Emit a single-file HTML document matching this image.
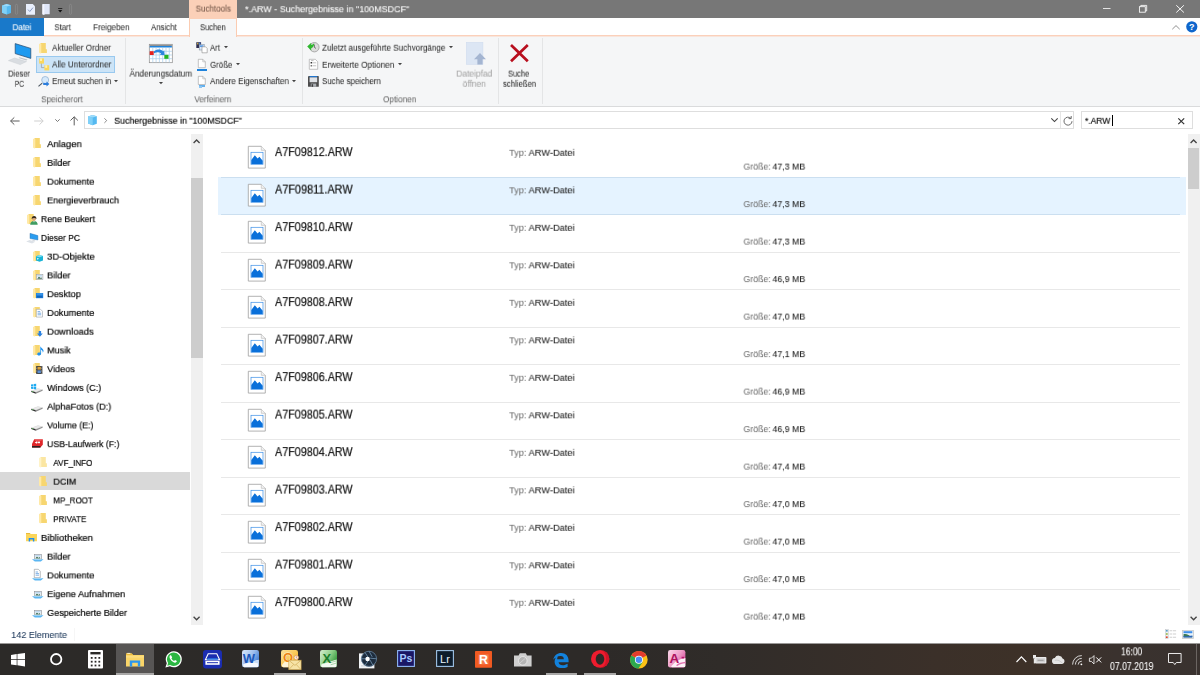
<!DOCTYPE html>
<html lang="de"><head><meta charset="utf-8"><title>*.ARW - Suchergebnisse in "100MSDCF"</title>
<style>
html,body{margin:0;padding:0;width:1200px;height:675px;overflow:hidden;background:#fff;font-family:"Liberation Sans",sans-serif;}
.t{position:absolute;line-height:1;white-space:nowrap;transform-origin:0 50%;will-change:transform;}
.b{position:absolute;}
svg{position:absolute;overflow:visible;}
</style></head><body>
<div class="b" style="left:0px;top:18px;width:1200px;height:18px;background:#ffffff;"></div>
<div class="b" style="left:0px;top:0px;width:1200px;height:18px;background:#777777;"></div>
<div class="b" style="left:189.2px;top:0px;width:47.6px;height:19px;background:#fbd0b8;"></div>
<div class="b" style="left:0px;top:18px;width:44px;height:17.5px;background:#1979ca;"></div>
<div class="b" style="left:0px;top:36px;width:1200px;height:70px;background:#f5f6f7;"></div>
<div class="b" style="left:44px;top:35px;width:1156px;height:1px;background:#fbd0ba;"></div>
<div class="b" style="left:44px;top:36px;width:1156px;height:1px;background:#f8e5dc;"></div>
<div class="b" style="left:189.2px;top:19px;width:47.5px;height:18px;background:#f5f6f7;border-left:1px solid #fbccb2;border-right:1px solid #fbccb2;box-sizing:border-box;"></div>
<div class="b" style="left:0px;top:106px;width:1200px;height:1px;background:#dadbdc;"></div>
<div class="b" style="left:125px;top:38px;width:1px;height:66px;background:#e4e5e6;"></div>
<div class="b" style="left:302px;top:38px;width:1px;height:66px;background:#e4e5e6;"></div>
<div class="b" style="left:498px;top:38px;width:1px;height:66px;background:#e4e5e6;"></div>
<div class="b" style="left:542px;top:38px;width:1px;height:66px;background:#e4e5e6;"></div>
<div class="b" style="left:35.6px;top:56.3px;width:79.4px;height:16.3px;background:#cce4f7;border:1px solid #99c9ef;box-sizing:border-box;"></div>
<svg style="left:114.4px;top:79.6px" width="4" height="2.2" viewBox="0 0 4 2.2"><path d="M0 0h4L2 2.2z" fill="#444"/></svg>
<svg style="left:223.7px;top:46.3px" width="4" height="2.2" viewBox="0 0 4 2.2"><path d="M0 0h4L2 2.2z" fill="#444"/></svg>
<svg style="left:235.6px;top:63.3px" width="4" height="2.2" viewBox="0 0 4 2.2"><path d="M0 0h4L2 2.2z" fill="#444"/></svg>
<svg style="left:291.8px;top:79.6px" width="4" height="2.2" viewBox="0 0 4 2.2"><path d="M0 0h4L2 2.2z" fill="#444"/></svg>
<svg style="left:449px;top:46.3px" width="4" height="2.2" viewBox="0 0 4 2.2"><path d="M0 0h4L2 2.2z" fill="#444"/></svg>
<svg style="left:397.6px;top:63.3px" width="4" height="2.2" viewBox="0 0 4 2.2"><path d="M0 0h4L2 2.2z" fill="#444"/></svg>
<svg style="left:158.8px;top:82px" width="4" height="2.2" viewBox="0 0 4 2.2"><path d="M0 0h4L2 2.2z" fill="#444"/></svg>
<div class="b" style="left:0px;top:107px;width:1200px;height:26px;background:#ffffff;"></div>
<div class="b" style="left:84px;top:111px;width:990px;height:18px;background:#ffffff;border:1px solid #dedede;box-sizing:border-box;"></div>
<div class="b" style="left:1060px;top:112px;width:1px;height:16px;background:#e5e5e5;"></div>
<div class="b" style="left:1081px;top:111px;width:112px;height:18px;background:#ffffff;border:1px solid #dedede;box-sizing:border-box;"></div>
<div class="b" style="left:1111.6px;top:115px;width:0.8px;height:10.5px;background:#000;"></div>
<div class="b" style="left:0px;top:472.2px;width:190px;height:17.8px;background:#d9d9d9;"></div>
<div class="b" style="left:190.5px;top:134px;width:12.5px;height:491px;background:#f0f0f0;"></div>
<div class="b" style="left:191px;top:178.3px;width:11.7px;height:179.6px;background:#cdcdcd;"></div>
<div class="b" style="left:218px;top:177.1px;width:968px;height:37.5px;background:#e5f3ff;"></div>
<div class="b" style="left:221px;top:176.8px;width:959px;height:1px;background:#cbdff0;"></div>
<div class="b" style="left:221px;top:214.3px;width:959px;height:1px;background:#cbdff0;"></div>
<div class="b" style="left:1187.5px;top:134px;width:12.5px;height:491px;background:#f0f0f0;"></div>
<div class="b" style="left:1188px;top:147.5px;width:11px;height:41.7px;background:#cdcdcd;"></div>
<div class="b" style="left:221px;top:251.8px;width:959px;height:1px;background:#e8e8e8;"></div>
<div class="b" style="left:221px;top:289.3px;width:959px;height:1px;background:#e8e8e8;"></div>
<div class="b" style="left:221px;top:326.8px;width:959px;height:1px;background:#e8e8e8;"></div>
<div class="b" style="left:221px;top:364.3px;width:959px;height:1px;background:#e8e8e8;"></div>
<div class="b" style="left:221px;top:401.8px;width:959px;height:1px;background:#e8e8e8;"></div>
<div class="b" style="left:221px;top:439.3px;width:959px;height:1px;background:#e8e8e8;"></div>
<div class="b" style="left:221px;top:476.8px;width:959px;height:1px;background:#e8e8e8;"></div>
<div class="b" style="left:221px;top:514.3000000000001px;width:959px;height:1px;background:#e8e8e8;"></div>
<div class="b" style="left:221px;top:551.8000000000001px;width:959px;height:1px;background:#e8e8e8;"></div>
<div class="b" style="left:221px;top:589.3000000000001px;width:959px;height:1px;background:#e8e8e8;"></div>
<div class="b" style="left:0px;top:625px;width:1200px;height:19px;background:#ffffff;"></div>
<div class="b" style="left:74px;top:628px;width:1px;height:13px;background:#f6f6f6;"></div>
<div class="b" style="left:0px;top:643px;width:1200px;height:1px;background:#9a9897;"></div>
<div class="b" style="left:0px;top:644px;width:1200px;height:31px;background:linear-gradient(to right,#2c2a28 0%,#2d2a28 50%,#302c29 60%,#3b3029 78%,#3d3128 85%,#3a322e 93%,#39322f 100%);"></div>
<div class="b" style="left:1196px;top:644px;width:1px;height:31px;background:#6b6562;"></div>
<div class="b" style="left:116.2px;top:644px;width:38px;height:31px;background:#575554;"></div>
<div class="b" style="left:116.2px;top:673px;width:37.999999999999986px;height:2px;background:#a9a8a7;"></div>
<div class="b" style="left:274px;top:673px;width:31.80000000000001px;height:2px;background:#a9a8a7;"></div>
<div class="b" style="left:545.8px;top:673px;width:31.700000000000045px;height:2px;background:#a9a8a7;"></div>
<div class="b" style="left:584.2px;top:673px;width:31.59999999999991px;height:2px;background:#a9a8a7;"></div>
<svg style="left:1.7px;top:3.7px" width="9.0" height="10.4" viewBox="0 0 9 10.4"><path d="M0 1.6L4.6 0 9 1.2V9L4.8 10.4 0 8.8z" fill="#55b9f0"/><path d="M0 1.6L4.6 0 9 1.2 4.8 2.6z" fill="#9ddcfb"/><path d="M0 1.6L4.8 2.6V10.4L0 8.8z" fill="#7fd0f8"/></svg>
<svg style="left:15px;top:4px" width="3" height="10.7" viewBox="0 0 3 10.7"><rect x=".4" y=".4" width="2.2" height="9.9" rx="1.1" fill="none" stroke="#8d8d8d" stroke-width=".7"/></svg>
<svg style="left:69.3px;top:4px" width="3" height="10.7" viewBox="0 0 3 10.7"><rect x=".4" y=".4" width="2.2" height="9.9" rx="1.1" fill="none" stroke="#8d8d8d" stroke-width=".7"/></svg>
<svg style="left:26px;top:4px" width="9" height="10.7" viewBox="0 0 9 10.7"><path d="M0 0h6.8L9 2.2V10.7H0z" fill="#e9effc"/><path d="M2 5.6l1.8 1.9L7 3.6" fill="none" stroke="#7f92bd" stroke-width=".9"/></svg>
<svg style="left:42.3px;top:4px" width="7.7" height="10.7" viewBox="0 0 7.7 10.7"><path d="M1 0h6.7v10.2H3.4L2 10.7 .4 10.2V.6z" fill="#dfe6f8"/><path d="M1 0L2.3 .5v10l-1 .2L.4 10.2V.6z" fill="#f3f6fe"/></svg>
<svg style="left:58.2px;top:8px" width="4.4" height="5" viewBox="0 0 4.4 5"><path d="M.1 .5h4.200" stroke="#111" stroke-width=".8"/><path d="M.1 2h4.200L2.200 4.600z" fill="#111"/></svg>
<svg style="left:1103px;top:8px" width="7.5" height="1" viewBox="0 0 7.5 1"><path d="M0 .5h7.5" stroke="#fff" stroke-width=".8"/></svg>
<svg style="left:1138.7px;top:5px" width="8.2" height="7.6" viewBox="0 0 8.2 7.6"><rect x=".4" y="1.700" width="5.900" height="5.500" fill="none" stroke="#fff" stroke-width=".85"/><path d="M1.800 1.600V.4h5.900v5.500H6.500" fill="none" stroke="#fff" stroke-width=".85"/></svg>
<svg style="left:1175.7px;top:4.6px" width="8.2" height="7.8" viewBox="0 0 8.2 7.8"><path d="M.3 .3l7.600 7.200M7.900 .3L.3 7.500" stroke="#fff" stroke-width=".95"/></svg>
<svg style="left:1171.5px;top:24.5px" width="8" height="4.4" viewBox="0 0 8 4.4"><path d="M.3 4.200L4 .6 7.700 4.200" fill="none" stroke="#909090" stroke-width="1"/></svg>
<svg style="left:1185.7px;top:20.9px" width="11.6" height="11.6" viewBox="0 0 11.6 11.6"><circle cx="5.8" cy="5.8" r="5.6" fill="#0f66cc"/><text x="5.8" y="9" font-size="9" font-weight="bold" fill="#fff" text-anchor="middle" font-family="Liberation Sans, sans-serif">?</text></svg>
<svg style="left:8px;top:43px" width="24" height="22" viewBox="0 0 24 22"><path d="M7.2 .6l15.6 4.8v10L7.2 10.6z" fill="#1e9af0" stroke="#27476b" stroke-width=".7"/><path d="M11.6 14.2l8 2.4-1.2 .9-8-2.4z" fill="#bfc4ca"/><path d="M6.5 15l12 3.6-6.4 3L.4 17.6z" fill="#d9dde1"/><path d="M6.5 15l12 3.6-6.4 3L.4 17.6z" fill="none" stroke="#c3c8cd" stroke-width=".4"/></svg>
<svg style="left:39.3px;top:42.8px" width="8.0" height="10.6" viewBox="0 0 8 10.6"><path d="M1.5 0h5.3v6.2h1.1v3.9H1.5z" fill="#f7d670"/><path d="M0 .7l2.3 .3v9L1.2 10.6 0 9.5z" fill="#ffe9a6"/></svg>
<svg style="left:39px;top:58px" width="10.5" height="13" viewBox="0 0 10.5 13"><path d="M2.4 5v4.6h3.2" fill="none" stroke="#9a9a9a" stroke-width=".7"/><rect x=".2" y=".4" width="4.8" height="5.2" fill="#fbd75b"/><rect x="1" y=".4" width="2" height="2.6" fill="#fff0b0"/><rect x="5.4" y="7.2" width="4.8" height="5.2" fill="#fbd75b"/><rect x="6.2" y="7.2" width="2" height="2.6" fill="#fff0b0"/></svg>
<svg style="left:38px;top:76px" width="11.5" height="11" viewBox="0 0 11.5 11"><path d="M4.2 7.2L.5 10.3" stroke="#4a5560" stroke-width="1.1"/><circle cx="7.2" cy="4" r="3.5" fill="#d5e9fb" stroke="#93b3d3" stroke-width=".8"/><path d="M5.2 7h3.3V5.5L11.4 8 8.5 10.6V9H5.2z" fill="#2b7ddc"/></svg>
<svg style="left:149.2px;top:43.8px" width="23.6" height="19" viewBox="0 0 23.6 19"><rect x=".3" y=".3" width="23" height="18.4" fill="#fff" stroke="#8d8d8d" stroke-width=".7"/><rect x=".7" y=".7" width="22.2" height="1.3" fill="#8f8f8f"/><rect x=".7" y="2" width="22.2" height="1.5" fill="#1f83dc"/><path d="M3.80 3.6V18.4" stroke="#a9d0ee" stroke-width=".75"/><path d="M7.10 3.6V18.4" stroke="#a9d0ee" stroke-width=".75"/><path d="M10.40 3.6V18.4" stroke="#a9d0ee" stroke-width=".75"/><path d="M13.70 3.6V18.4" stroke="#a9d0ee" stroke-width=".75"/><path d="M17.00 3.6V18.4" stroke="#a9d0ee" stroke-width=".75"/><path d="M20.30 3.6V18.4" stroke="#a9d0ee" stroke-width=".75"/><path d="M.7 7.30H22.9" stroke="#a9d0ee" stroke-width=".75"/><path d="M.7 11.00H22.9" stroke="#a9d0ee" stroke-width=".75"/><path d="M.7 14.70H22.9" stroke="#a9d0ee" stroke-width=".75"/><rect x=".7" y="7.2" width="4" height="3.8" fill="#e5201c"/><rect x="15.3" y="10.8" width="4.2" height="4" fill="#22b522"/><path d="M4.900 7.400c3.200-2.600 7-2.400 9.200 0l1.100-1.100 .5 4.900-4.900-.5 1.200-1.200c-1.700-1.700-4.300-1.800-7.100 0z" fill="#2a86de"/></svg>
<svg style="left:196.4px;top:42px" width="11.6" height="11" viewBox="0 0 11.6 11"><rect x=".3" y=".2" width="4.8" height="5.8" fill="#2d2f52"/><rect x="1.2" y=".8" width="1.2" height="1.6" fill="#e8c23a"/><rect x="2.8" y=".8" width="1.6" height="1.6" fill="#3e78d6"/><rect x="3.2" y="2.6" width="5" height="5.4" fill="#dbe9fb" stroke="#7a8896" stroke-width=".5"/><rect x="4" y="3.4" width="3.4" height="1.4" fill="#3f8ae0"/><path d="M6 4.8h3.6l1.6 1.6v4.4H6z" fill="#fff" stroke="#8a8a8a" stroke-width=".6"/></svg>
<svg style="left:198.4px;top:59px" width="7.6" height="9" viewBox="0 0 7.6 9"><path d="M.3 .3h4.5l2.5 2.5v5.9H.3z" fill="#fff" stroke="#9c9c9c" stroke-width=".6"/><path d="M4.8 .3v2.5h2.5" fill="none" stroke="#9c9c9c" stroke-width=".5"/></svg>
<div class="b" style="left:197px;top:68.9px;width:10px;height:1.7px;background:#1f83dc;"></div>
<svg style="left:198.4px;top:76px" width="7.6" height="8.8" viewBox="0 0 7.6 8.8"><path d="M.3 .3h4.5l2.5 2.5v5.700000000000001H.3z" fill="#fff" stroke="#9c9c9c" stroke-width=".6"/><path d="M4.8 .3v2.5h2.5" fill="none" stroke="#9c9c9c" stroke-width=".5"/></svg>
<div class="b" style="left:198.8px;top:85.2px;width:6px;height:1.6px;background:#63b0ee;"></div>
<div class="b" style="left:198.8px;top:86.4px;width:3.6px;height:1.2px;background:#8cc6f3;"></div>
<svg style="left:307.4px;top:42.4px" width="12.4" height="10.6" viewBox="0 0 12.4 10.6"><circle cx="7.4" cy="5.2" r="4.7" fill="#dcdcdc" stroke="#9b9b9b" stroke-width=".8"/><path d="M7.4 2.6V5.4l1.6 1" fill="none" stroke="#444" stroke-width=".7"/><path d="M.2 4.600L4.200 .8V3C5.600 2.800 6.600 2 7.200 1 7.400 3.600 6.200 5.600 4.200 6.200V8.400z" fill="#2fb72f"/></svg>
<svg style="left:309.2px;top:59px" width="9" height="10.6" viewBox="0 0 9 10.6"><path d="M.3 .3h6L8.700 2.700v7.600H.3z" fill="#fff" stroke="#9c9c9c" stroke-width=".6"/><rect x="1.600" y="3" width="1.6" height="1.500" fill="#333"/><rect x="1.600" y="6" width="1.600" height="1.500" fill="#777"/><path d="M4 3.8h3.200M4 6.800h3.200M2 1.600h2.600" stroke="#999" stroke-width=".6"/></svg>
<svg style="left:308.4px;top:75.6px" width="10.8" height="10.8" viewBox="0 0 10.8 10.8"><rect x="0" y="0" width="10.800" height="10.800" rx=".5" fill="#4d4d4d"/><rect x="1.600" y="0" width="7.600" height="1.400" fill="#1f74cc"/><rect x="1.600" y="1.400" width="7.600" height="4.800" fill="#dfe2e6"/><rect x="2.800" y="7.600" width="5.400" height="3.200" fill="#a9adb2"/><rect x="3.600" y="8.200" width="1.500" height="2.600" fill="#3d3d3d"/></svg>
<svg style="left:466px;top:41.8px" width="20.2" height="22.8" viewBox="0 0 20.2 22.8"><rect x=".3" y=".3" width="16.600" height="22" fill="#dce6f4" stroke="#d0dcef" stroke-width=".6"/><path d="M14 11L20 17.200H16.600v5.400H11.400V17.200H8z" fill="#a4b5d1"/></svg>
<svg style="left:510px;top:44px" width="18.8" height="18.2" viewBox="0 0 18.8 18.2"><path d="M1 1l16.800 16.200M17.800 1L1 17.200" stroke="#b80f1e" stroke-width="2.700"/></svg>
<svg style="left:10px;top:116.5px" width="9.8" height="8" viewBox="0 0 9.8 8"><path d="M.6 4h9M4.300 .4L.6 4l3.700 3.600" fill="none" stroke="#5b5b5b" stroke-width="1"/></svg>
<svg style="left:34px;top:116.5px" width="9.8" height="8" viewBox="0 0 9.8 8"><path d="M.2 4h9M5.500 .4L9.200 4 5.500 7.600" fill="none" stroke="#cfcfcf" stroke-width="1"/></svg>
<svg style="left:55.2px;top:119px" width="5" height="3" viewBox="0 0 5 3"><path d="M.3 .3l2.200 2.200L4.700 .3" fill="none" stroke="#6a6a6a" stroke-width=".9"/></svg>
<svg style="left:69.7px;top:116.3px" width="8.4" height="9.4" viewBox="0 0 8.4 9.4"><path d="M4.200 .8v8.600M.5 4.500L4.200 .8l3.700 3.700" fill="none" stroke="#5b5b5b" stroke-width="1"/></svg>
<svg style="left:87.7px;top:114.6px" width="8.82" height="10.192" viewBox="0 0 9 10.4"><path d="M0 1.6L4.6 0 9 1.2V9L4.8 10.4 0 8.8z" fill="#55b9f0"/><path d="M0 1.6L4.6 0 9 1.2 4.8 2.6z" fill="#9ddcfb"/><path d="M0 1.6L4.8 2.6V10.4L0 8.8z" fill="#7fd0f8"/></svg>
<svg style="left:104px;top:117.5px" width="3.2" height="5.2" viewBox="0 0 3.2 5.2"><path d="M.4 .3l2.300 2.300L.4 4.900" fill="none" stroke="#6a6a6a" stroke-width=".8"/></svg>
<svg style="left:1051px;top:118.3px" width="7" height="4.2" viewBox="0 0 7 4.2"><path d="M.3 .4l3.200 3.200L6.700 .4" fill="none" stroke="#444" stroke-width="1.100"/></svg>
<svg style="left:1062.5px;top:115.8px" width="10" height="10" viewBox="0 0 10 10"><path d="M7.800 2.300A4 4 0 1 0 9 5.200" fill="none" stroke="#5a5a5a" stroke-width=".9"/><path d="M5.600 2.600h2.600V0" fill="none" stroke="#5a5a5a" stroke-width=".9"/></svg>
<svg style="left:1178px;top:117.5px" width="6.5" height="6.5" viewBox="0 0 6.5 6.5"><path d="M.3 .3l5.900 5.900M6.200 .3L.3 6.200" stroke="#333" stroke-width="1.200"/></svg>
<svg style="left:193px;top:138.8px" width="7.2" height="4.8" viewBox="0 0 7.2 4.8"><path d="M.6 4L3.600 1 6.600 4" fill="none" stroke="#454545" stroke-width="1.350"/></svg>
<svg style="left:193px;top:616.2px" width="7.2" height="4.8" viewBox="0 0 7.2 4.8"><path d="M.6 .800L3.600 3.800 6.600 .800" fill="none" stroke="#454545" stroke-width="1.350"/></svg>
<svg style="left:1190px;top:138.8px" width="7.2" height="4.8" viewBox="0 0 7.2 4.8"><path d="M.6 4L3.600 1 6.600 4" fill="none" stroke="#454545" stroke-width="1.350"/></svg>
<svg style="left:1190px;top:616.2px" width="7.2" height="4.8" viewBox="0 0 7.2 4.8"><path d="M.6 .800L3.600 3.800 6.600 .800" fill="none" stroke="#454545" stroke-width="1.350"/></svg>
<svg style="left:33.0px;top:138.39999999999998px" width="8.0" height="10.6" viewBox="0 0 8 10.6"><path d="M1.5 0h5.3v6.2h1.1v3.9H1.5z" fill="#f7d670"/><path d="M0 .7l2.3 .3v9L1.2 10.6 0 9.5z" fill="#ffe9a6"/></svg>
<svg style="left:33.0px;top:157.14999999999998px" width="8.0" height="10.6" viewBox="0 0 8 10.6"><path d="M1.5 0h5.3v6.2h1.1v3.9H1.5z" fill="#f7d670"/><path d="M0 .7l2.3 .3v9L1.2 10.6 0 9.5z" fill="#ffe9a6"/></svg>
<svg style="left:33.0px;top:175.89999999999998px" width="8.0" height="10.6" viewBox="0 0 8 10.6"><path d="M1.5 0h5.3v6.2h1.1v3.9H1.5z" fill="#f7d670"/><path d="M0 .7l2.3 .3v9L1.2 10.6 0 9.5z" fill="#ffe9a6"/></svg>
<svg style="left:33.0px;top:194.64999999999998px" width="8.0" height="10.6" viewBox="0 0 8 10.6"><path d="M1.5 0h5.3v6.2h1.1v3.9H1.5z" fill="#f7d670"/><path d="M0 .7l2.3 .3v9L1.2 10.6 0 9.5z" fill="#ffe9a6"/></svg>
<svg style="left:27px;top:213.6px" width="7.84" height="10.388" viewBox="0 0 8 10.6"><path d="M1.5 0h5.3v6.2h1.1v3.9H1.5z" fill="#f7d670"/><path d="M0 .7l2.3 .3v9L1.2 10.6 0 9.5z" fill="#ffe9a6"/></svg>
<svg style="left:29.6px;top:215.6px" width="8" height="9" viewBox="0 0 8 9"><path d="M.2 8.800C.2 6.400 1.800 5 4 5s3.700 1.400 3.700 3.800z" fill="#3f9c62"/><path d="M3.300 5l.7 1.600L4.700 5z" fill="#e8efe8"/><circle cx="4" cy="2.800" r="2.100" fill="#d7a77b"/><path d="M1.700 3C1.500 1 2.700 0 4.100 0s2.600 1 2.300 3C5.800 2.300 5 2 4 2.100 3 2.200 2.300 2.400 1.700 3z" fill="#33291f"/></svg>
<svg style="left:25.5px;top:233.14999999999998px" width="12.4" height="11" viewBox="0 0 12.4 11"><path d="M4 .3l7.900 2.300v4.400L4 5.600z" fill="#2a9df0" stroke="#2f6ea8" stroke-width=".4"/><path d="M6.400 6.800l3 .9-.5 .5-3-.9z" fill="#c5cad0"/><path d="M3.600 7l5.800 1.700-3.400 1.700L.2 8.600z" fill="#dde2e8"/></svg>
<svg style="left:33.0px;top:250.89999999999998px" width="8.0" height="10.6" viewBox="0 0 8 10.6"><path d="M1.5 0h5.3v6.2h1.1v3.9H1.5z" fill="#f7d670"/><path d="M0 .7l2.3 .3v9L1.2 10.6 0 9.5z" fill="#ffe9a6"/></svg>
<svg style="left:36px;top:255.39999999999998px" width="7" height="6.8" viewBox="0 0 7 6.8"><path d="M0 1.200L3.400 0 7 1V5.600L3.600 6.800 0 5.600z" fill="#19b4d6"/><path d="M0 1.200L3.400 0 7 1 3.600 2.200z" fill="#7fe0f2"/><path d="M1.200 2.800l1.800 .9-1.800 1z" fill="#eafcff"/></svg>
<svg style="left:33.0px;top:269.65px" width="8.0" height="10.6" viewBox="0 0 8 10.6"><path d="M1.5 0h5.3v6.2h1.1v3.9H1.5z" fill="#f7d670"/><path d="M0 .7l2.3 .3v9L1.2 10.6 0 9.5z" fill="#ffe9a6"/></svg>
<svg style="left:36px;top:274.05px" width="7.2" height="6" viewBox="0 0 7.2 6"><rect x=".3" y=".3" width="6.600" height="5.400" fill="#f4f6f8" stroke="#9aa0a6" stroke-width=".6"/><path d="M1.200 4.800l1.800-2.400 1.400 1.600.8-.8 1 1.600z" fill="#3e6f58"/><rect x="1.200" y="1.100" width="4.800" height="1.400" fill="#b9d6ee"/></svg>
<svg style="left:33.0px;top:288.4px" width="8.0" height="10.6" viewBox="0 0 8 10.6"><path d="M1.5 0h5.3v6.2h1.1v3.9H1.5z" fill="#f7d670"/><path d="M0 .7l2.3 .3v9L1.2 10.6 0 9.5z" fill="#ffe9a6"/></svg>
<svg style="left:36px;top:293.4px" width="7.2" height="5.2" viewBox="0 0 7.2 5.2"><rect x="0" y="0" width="7.200" height="5.200" fill="#1e7fdc"/><rect x=".8" y="3.400" width="5.600" height="1" fill="#0d55a6"/><rect x=".6" y=".5" width="6" height="1" fill="#4ea7f0"/></svg>
<svg style="left:33.0px;top:307.15px" width="8.0" height="10.6" viewBox="0 0 8 10.6"><path d="M1.5 0h5.3v6.2h1.1v3.9H1.5z" fill="#f7d670"/><path d="M0 .7l2.3 .3v9L1.2 10.6 0 9.5z" fill="#ffe9a6"/></svg>
<svg style="left:36.1px;top:309.05px" width="6.8" height="8.4" viewBox="0 0 6.8 8.4"><path d="M.3 .3h4.300l1.900 1.900v5.900H.3z" fill="#fff" stroke="#9aa0a6" stroke-width=".6"/><path d="M1.600 2.600h2.600M1.600 4.200h3.600M1.600 5.800h3.600" stroke="#4b8fd8" stroke-width=".7"/></svg>
<svg style="left:33.0px;top:325.9px" width="8.0" height="10.6" viewBox="0 0 8 10.6"><path d="M1.5 0h5.3v6.2h1.1v3.9H1.5z" fill="#f7d670"/><path d="M0 .7l2.3 .3v9L1.2 10.6 0 9.5z" fill="#ffe9a6"/></svg>
<svg style="left:37.2px;top:330.7px" width="5.8" height="5.8" viewBox="0 0 5.8 5.8"><path d="M1.700 0h2.400v2.600h1.700L2.900 5.800 0 2.600h1.700z" fill="#2b82e2"/></svg>
<svg style="left:33.0px;top:344.65px" width="8.0" height="10.6" viewBox="0 0 8 10.6"><path d="M1.5 0h5.3v6.2h1.1v3.9H1.5z" fill="#f7d670"/><path d="M0 .7l2.3 .3v9L1.2 10.6 0 9.5z" fill="#ffe9a6"/></svg>
<svg style="left:36.6px;top:346.15px" width="7" height="9.6" viewBox="0 0 7 9.6"><path d="M3.300 .2c.4 1.600 2.900 2 3.200 4.300.1 .9-.3 1.600-.8 2.100.3-1.600-.8-2.600-1.600-2.900v4c0 1.200-1.100 1.800-2.200 1.800S.2 8.900 .2 8c0-1 1-1.600 1.900-1.600.5 0 .9.100 1.200.3z" fill="#1e92f2"/></svg>
<svg style="left:33.0px;top:363.4px" width="8.0" height="10.6" viewBox="0 0 8 10.6"><path d="M1.5 0h5.3v6.2h1.1v3.9H1.5z" fill="#f7d670"/><path d="M0 .7l2.3 .3v9L1.2 10.6 0 9.5z" fill="#ffe9a6"/></svg>
<svg style="left:36.4px;top:365.9px" width="6.4" height="8" viewBox="0 0 6.4 8"><rect x="0" y="0" width="6.400" height="8" fill="#3b3b3b"/><rect x="1.500" y=".8" width="3.400" height="2.800" fill="#d8a03a"/><rect x="1.500" y="4.400" width="3.400" height="2.800" fill="#5d8fd0"/><path d="M.7 .6v7M5.700 .6v7" stroke="#ddd" stroke-width=".6" stroke-dasharray=".8 .8"/></svg>
<svg style="left:31.4px;top:388.05px" width="11.8" height="5.8" viewBox="0 0 11.8 5.8"><path d="M.3 2.700L7 .3l4.600 1.300L4.800 4.300z" fill="#dcdcdc"/><path d="M1.600 2.700L7 .8l3.200 .9L5 3.700z" fill="#e9e9e9"/><path d="M.3 2.700L4.800 4.300v1.400L.3 4.100z" fill="#2e2e2e"/><path d="M4.800 4.300l6.800-2.700v1.200L4.800 5.700z" fill="#8e8e8e"/><rect x="1" y="3.400" width="1.200" height=".7" fill="#5fe05f"/></svg>
<svg style="left:31px;top:383.55px" width="5.2" height="5.2" viewBox="0 0 5.2 5.2"><path d="M0 .6L2.300 .2v2.200H0zM2.800 .1L5.200 -.2v2.600H2.800zM0 2.900h2.300v2.200L0 4.700zM2.800 2.900h2.400v2.600L2.800 5.100z" fill="#1eaaf1"/></svg>
<svg style="left:31.4px;top:406.0px" width="11.8" height="5.8" viewBox="0 0 11.8 5.8"><path d="M.3 2.700L7 .3l4.600 1.300L4.800 4.300z" fill="#dcdcdc"/><path d="M1.600 2.700L7 .8l3.200 .9L5 3.700z" fill="#e9e9e9"/><path d="M.3 2.700L4.800 4.300v1.400L.3 4.100z" fill="#2e2e2e"/><path d="M4.800 4.300l6.800-2.700v1.200L4.800 5.700z" fill="#8e8e8e"/><rect x="1" y="3.400" width="1.200" height=".7" fill="#5fe05f"/></svg>
<svg style="left:31.4px;top:424.75px" width="11.8" height="5.8" viewBox="0 0 11.8 5.8"><path d="M.3 2.700L7 .3l4.600 1.300L4.800 4.300z" fill="#dcdcdc"/><path d="M1.600 2.700L7 .8l3.200 .9L5 3.700z" fill="#e9e9e9"/><path d="M.3 2.700L4.800 4.300v1.400L.3 4.100z" fill="#2e2e2e"/><path d="M4.800 4.300l6.800-2.700v1.200L4.800 5.700z" fill="#8e8e8e"/><rect x="1" y="3.400" width="1.200" height=".7" fill="#5fe05f"/></svg>
<svg style="left:32px;top:439.4px" width="11" height="8.8" viewBox="0 0 11 8.8"><path d="M2.200 .2h8.600v5.600L8.400 8.600H0V5z" fill="#e0262a"/><path d="M0 7h8.400v1.600H0z" fill="#2b2222"/><path d="M2.600 3.400l2.400-1.200v2.600z" fill="#fff"/><rect x="5.400" y="2.600" width="2.600" height="1.600" fill="#fff"/><path d="M3.200 1.200h6.400" stroke="#f48a8a" stroke-width=".6"/></svg>
<svg style="left:39.1px;top:457.15px" width="8.0" height="10.6" viewBox="0 0 8 10.6"><path d="M1.5 0h5.3v6.2h1.1v3.9H1.5z" fill="#fbe6a2"/><path d="M0 .7l2.3 .3v9L1.2 10.6 0 9.5z" fill="#fff3c8"/></svg>
<svg style="left:39.1px;top:475.9px" width="8.0" height="10.6" viewBox="0 0 8 10.6"><path d="M1.5 0h5.3v6.2h1.1v3.9H1.5z" fill="#f7d670"/><path d="M0 .7l2.3 .3v9L1.2 10.6 0 9.5z" fill="#ffe9a6"/></svg>
<svg style="left:39.1px;top:494.65px" width="8.0" height="10.6" viewBox="0 0 8 10.6"><path d="M1.5 0h5.3v6.2h1.1v3.9H1.5z" fill="#f7d670"/><path d="M0 .7l2.3 .3v9L1.2 10.6 0 9.5z" fill="#ffe9a6"/></svg>
<svg style="left:39.1px;top:513.4000000000001px" width="8.0" height="10.6" viewBox="0 0 8 10.6"><path d="M1.5 0h5.3v6.2h1.1v3.9H1.5z" fill="#f7d670"/><path d="M0 .7l2.3 .3v9L1.2 10.6 0 9.5z" fill="#ffe9a6"/></svg>
<svg style="left:26px;top:532.45px" width="11" height="9.4" viewBox="0 0 11 9.4"><path d="M0 1h3.600l1 1H11v7.200H0z" fill="#fbd55a"/><path d="M0 1h3.600l1 1H0z" fill="#e8b93a"/><path d="M2.700 9.400V6h5.600v3.400H6.900V7.400H4.100v2z" fill="#1e90f0"/></svg>
<svg style="left:34px;top:553.5px" width="7.8" height="5.8" viewBox="0 0 7.8 5.8"><rect x=".3" y=".3" width="7.200" height="5.200" fill="#eef2f5" stroke="#8a9096" stroke-width=".6"/><path d="M1.200 4.600l1.800-2.200 1.500 1.500 1-.9 1.100 1.600z" fill="#3e6f58"/><rect x="1.200" y="1.100" width="5.400" height="1.300" fill="#b9d6ee"/></svg>
<svg style="left:31.8px;top:558.9000000000001px" width="11.6" height="2.6" viewBox="0 0 11.6 2.6"><path d="M0 .2h11.600L8.800 2.500H2.800z" fill="#5bb6f2"/><path d="M2.200 0h7.200v.8H2.200z" fill="#a9daf9"/></svg>
<svg style="left:34.3px;top:569.25px" width="6.6" height="9" viewBox="0 0 6.6 9"><path d="M.3 .3h4.100l1.900 1.900v6.500H.3z" fill="#fff" stroke="#8a9096" stroke-width=".6"/><path d="M1.600 3h2.400M1.600 4.600h3.400M1.600 6.200h3.400" stroke="#4b8fd8" stroke-width=".7"/></svg>
<svg style="left:31.8px;top:577.6500000000001px" width="11.6" height="2.6" viewBox="0 0 11.6 2.6"><path d="M0 .2h11.600L8.800 2.500H2.800z" fill="#5bb6f2"/><path d="M2.200 0h7.200v.8H2.200z" fill="#a9daf9"/></svg>
<svg style="left:34px;top:591.0px" width="7.8" height="5.8" viewBox="0 0 7.8 5.8"><rect x=".3" y=".3" width="7.200" height="5.200" fill="#eef2f5" stroke="#8a9096" stroke-width=".6"/><path d="M1.200 4.600l1.800-2.200 1.500 1.500 1-.9 1.100 1.600z" fill="#3e6f58"/><rect x="1.200" y="1.100" width="5.400" height="1.300" fill="#b9d6ee"/></svg>
<svg style="left:31.8px;top:596.4000000000001px" width="11.6" height="2.6" viewBox="0 0 11.6 2.6"><path d="M0 .2h11.600L8.800 2.500H2.800z" fill="#5bb6f2"/><path d="M2.200 0h7.200v.8H2.200z" fill="#a9daf9"/></svg>
<svg style="left:34px;top:609.75px" width="7.8" height="5.8" viewBox="0 0 7.8 5.8"><rect x=".3" y=".3" width="7.200" height="5.200" fill="#eef2f5" stroke="#8a9096" stroke-width=".6"/><path d="M1.200 4.600l1.800-2.200 1.500 1.500 1-.9 1.100 1.600z" fill="#3e6f58"/><rect x="1.200" y="1.100" width="5.400" height="1.300" fill="#b9d6ee"/></svg>
<svg style="left:31.8px;top:615.1500000000001px" width="11.6" height="2.6" viewBox="0 0 11.6 2.6"><path d="M0 .2h11.600L8.800 2.500H2.800z" fill="#5bb6f2"/><path d="M2.200 0h7.200v.8H2.200z" fill="#a9daf9"/></svg>
<svg style="left:248.2px;top:146.20px" width="17.600" height="22.40" viewBox="0 0 17.600 22.40"><path d="M.3 .3h13l4 4v17.800H.3z" fill="#fff" stroke="#a0a0a0" stroke-width=".8"/><path d="M13.300 .3v4h4" fill="#f2f2f2" stroke="#b3b3b3" stroke-width=".6"/><rect x="3" y="6.300" width="12" height="12" fill="#fff" stroke="#3b8ee6" stroke-width=".7"/><path d="M3.300 14L6.800 9.300l2.800 3.300 1.800-1.800 3.300 4V18H3.300z" fill="#0a70da"/></svg>
<svg style="left:248.2px;top:183.70px" width="17.600" height="22.40" viewBox="0 0 17.600 22.40"><path d="M.3 .3h13l4 4v17.800H.3z" fill="#fff" stroke="#a0a0a0" stroke-width=".8"/><path d="M13.300 .3v4h4" fill="#f2f2f2" stroke="#b3b3b3" stroke-width=".6"/><rect x="3" y="6.300" width="12" height="12" fill="#fff" stroke="#3b8ee6" stroke-width=".7"/><path d="M3.300 14L6.800 9.300l2.800 3.300 1.800-1.800 3.300 4V18H3.300z" fill="#0a70da"/></svg>
<svg style="left:248.2px;top:221.20px" width="17.600" height="22.40" viewBox="0 0 17.600 22.40"><path d="M.3 .3h13l4 4v17.800H.3z" fill="#fff" stroke="#a0a0a0" stroke-width=".8"/><path d="M13.300 .3v4h4" fill="#f2f2f2" stroke="#b3b3b3" stroke-width=".6"/><rect x="3" y="6.300" width="12" height="12" fill="#fff" stroke="#3b8ee6" stroke-width=".7"/><path d="M3.300 14L6.800 9.300l2.800 3.300 1.800-1.800 3.300 4V18H3.300z" fill="#0a70da"/></svg>
<svg style="left:248.2px;top:258.70px" width="17.600" height="22.40" viewBox="0 0 17.600 22.40"><path d="M.3 .3h13l4 4v17.800H.3z" fill="#fff" stroke="#a0a0a0" stroke-width=".8"/><path d="M13.300 .3v4h4" fill="#f2f2f2" stroke="#b3b3b3" stroke-width=".6"/><rect x="3" y="6.300" width="12" height="12" fill="#fff" stroke="#3b8ee6" stroke-width=".7"/><path d="M3.300 14L6.800 9.300l2.800 3.300 1.800-1.800 3.300 4V18H3.300z" fill="#0a70da"/></svg>
<svg style="left:248.2px;top:296.20px" width="17.600" height="22.40" viewBox="0 0 17.600 22.40"><path d="M.3 .3h13l4 4v17.800H.3z" fill="#fff" stroke="#a0a0a0" stroke-width=".8"/><path d="M13.300 .3v4h4" fill="#f2f2f2" stroke="#b3b3b3" stroke-width=".6"/><rect x="3" y="6.300" width="12" height="12" fill="#fff" stroke="#3b8ee6" stroke-width=".7"/><path d="M3.300 14L6.800 9.300l2.800 3.300 1.800-1.800 3.300 4V18H3.300z" fill="#0a70da"/></svg>
<svg style="left:248.2px;top:333.70px" width="17.600" height="22.40" viewBox="0 0 17.600 22.40"><path d="M.3 .3h13l4 4v17.800H.3z" fill="#fff" stroke="#a0a0a0" stroke-width=".8"/><path d="M13.300 .3v4h4" fill="#f2f2f2" stroke="#b3b3b3" stroke-width=".6"/><rect x="3" y="6.300" width="12" height="12" fill="#fff" stroke="#3b8ee6" stroke-width=".7"/><path d="M3.300 14L6.800 9.300l2.800 3.300 1.800-1.800 3.300 4V18H3.300z" fill="#0a70da"/></svg>
<svg style="left:248.2px;top:371.20px" width="17.600" height="22.40" viewBox="0 0 17.600 22.40"><path d="M.3 .3h13l4 4v17.800H.3z" fill="#fff" stroke="#a0a0a0" stroke-width=".8"/><path d="M13.300 .3v4h4" fill="#f2f2f2" stroke="#b3b3b3" stroke-width=".6"/><rect x="3" y="6.300" width="12" height="12" fill="#fff" stroke="#3b8ee6" stroke-width=".7"/><path d="M3.300 14L6.800 9.300l2.800 3.300 1.800-1.800 3.300 4V18H3.300z" fill="#0a70da"/></svg>
<svg style="left:248.2px;top:408.70px" width="17.600" height="22.40" viewBox="0 0 17.600 22.40"><path d="M.3 .3h13l4 4v17.800H.3z" fill="#fff" stroke="#a0a0a0" stroke-width=".8"/><path d="M13.300 .3v4h4" fill="#f2f2f2" stroke="#b3b3b3" stroke-width=".6"/><rect x="3" y="6.300" width="12" height="12" fill="#fff" stroke="#3b8ee6" stroke-width=".7"/><path d="M3.300 14L6.800 9.300l2.800 3.300 1.800-1.800 3.300 4V18H3.300z" fill="#0a70da"/></svg>
<svg style="left:248.2px;top:446.20px" width="17.600" height="22.40" viewBox="0 0 17.600 22.40"><path d="M.3 .3h13l4 4v17.800H.3z" fill="#fff" stroke="#a0a0a0" stroke-width=".8"/><path d="M13.300 .3v4h4" fill="#f2f2f2" stroke="#b3b3b3" stroke-width=".6"/><rect x="3" y="6.300" width="12" height="12" fill="#fff" stroke="#3b8ee6" stroke-width=".7"/><path d="M3.300 14L6.800 9.300l2.800 3.300 1.800-1.800 3.300 4V18H3.300z" fill="#0a70da"/></svg>
<svg style="left:248.2px;top:483.70px" width="17.600" height="22.40" viewBox="0 0 17.600 22.40"><path d="M.3 .3h13l4 4v17.800H.3z" fill="#fff" stroke="#a0a0a0" stroke-width=".8"/><path d="M13.300 .3v4h4" fill="#f2f2f2" stroke="#b3b3b3" stroke-width=".6"/><rect x="3" y="6.300" width="12" height="12" fill="#fff" stroke="#3b8ee6" stroke-width=".7"/><path d="M3.300 14L6.800 9.300l2.800 3.300 1.800-1.800 3.300 4V18H3.300z" fill="#0a70da"/></svg>
<svg style="left:248.2px;top:521.20px" width="17.600" height="22.40" viewBox="0 0 17.600 22.40"><path d="M.3 .3h13l4 4v17.800H.3z" fill="#fff" stroke="#a0a0a0" stroke-width=".8"/><path d="M13.300 .3v4h4" fill="#f2f2f2" stroke="#b3b3b3" stroke-width=".6"/><rect x="3" y="6.300" width="12" height="12" fill="#fff" stroke="#3b8ee6" stroke-width=".7"/><path d="M3.300 14L6.800 9.300l2.800 3.300 1.800-1.800 3.300 4V18H3.300z" fill="#0a70da"/></svg>
<svg style="left:248.2px;top:558.70px" width="17.600" height="22.40" viewBox="0 0 17.600 22.40"><path d="M.3 .3h13l4 4v17.800H.3z" fill="#fff" stroke="#a0a0a0" stroke-width=".8"/><path d="M13.300 .3v4h4" fill="#f2f2f2" stroke="#b3b3b3" stroke-width=".6"/><rect x="3" y="6.300" width="12" height="12" fill="#fff" stroke="#3b8ee6" stroke-width=".7"/><path d="M3.300 14L6.800 9.300l2.800 3.300 1.800-1.800 3.300 4V18H3.300z" fill="#0a70da"/></svg>
<svg style="left:248.2px;top:596.20px" width="17.600" height="22.40" viewBox="0 0 17.600 22.40"><path d="M.3 .3h13l4 4v17.800H.3z" fill="#fff" stroke="#a0a0a0" stroke-width=".8"/><path d="M13.300 .3v4h4" fill="#f2f2f2" stroke="#b3b3b3" stroke-width=".6"/><rect x="3" y="6.300" width="12" height="12" fill="#fff" stroke="#3b8ee6" stroke-width=".7"/><path d="M3.300 14L6.800 9.300l2.800 3.300 1.800-1.800 3.300 4V18H3.300z" fill="#0a70da"/></svg>
<svg style="left:1164.8px;top:629.2px" width="11.4" height="10" viewBox="0 0 11.4 10"><rect x=".3" y=".3" width="3" height="9.400" fill="#eef1f4" stroke="#bfc4c9" stroke-width=".5"/><rect x=".9" y="1" width="1.800" height="1.600" fill="#5aa0c8"/><rect x=".9" y="4.200" width="1.800" height="1.600" fill="#9ab84a"/><rect x=".9" y="7.400" width="1.800" height="1.600" fill="#e0452c"/><path d="M4.600 1.800h2.600M7.900 1.800h3.200M4.600 5h2.600M7.900 5h3.200M4.600 8.200h2.600M7.900 8.200h3.200" stroke="#cfcfcf" stroke-width="1.100"/></svg>
<svg style="left:1182px;top:630px" width="11.8" height="8.8" viewBox="0 0 11.8 8.8"><rect x=".4" y=".4" width="11" height="8" fill="#e9f3fb" stroke="#c9c9c9" stroke-width=".8"/><rect x="1.500" y="1.200" width="8.800" height="2" fill="#3f90ea"/><path d="M1.500 7.200V4.200c1.600-.6 3.400-.2 5 .9 1.300.9 2.600 1 3.800.6v1.500z" fill="#3c7a55"/><path d="M1.500 7.400V6c2.600.5 5.600.5 8.800-.4v1.800z" fill="#2f66b8"/></svg>
<svg style="left:11.3px;top:652.5px" width="14" height="13.4" viewBox="0 0 14 13.4"><path d="M0 1.900L5.700 1.100v5.200H0zM6.400 1L14 0v6.300H6.400zM0 7h5.700v5.200L0 11.400zM6.400 7H14v6.400L6.400 12.300z" fill="#fff"/></svg>
<svg style="left:50px;top:653.2px" width="12.4" height="12.4" viewBox="0 0 12.4 12.4"><circle cx="6.200" cy="6.200" r="5.200" fill="none" stroke="#fff" stroke-width="1.800"/></svg>
<svg style="left:88.3px;top:650px" width="15" height="18.6" viewBox="0 0 15 18.6"><rect x="0" y="0" width="15" height="18.600" rx="1" fill="#fff"/><rect x="2.400" y="2" width="10.200" height="2.400" fill="#2c2a28"/><rect x="2.8" y="7.0" width="1.800" height="1.800" fill="#2c2a28"/><rect x="6.6" y="7.0" width="1.800" height="1.800" fill="#2c2a28"/><rect x="10.4" y="7.0" width="1.800" height="1.800" fill="#2c2a28"/><rect x="2.8" y="10.8" width="1.800" height="1.800" fill="#2c2a28"/><rect x="6.6" y="10.8" width="1.800" height="1.800" fill="#2c2a28"/><rect x="10.4" y="10.8" width="1.800" height="1.800" fill="#2c2a28"/><rect x="2.8" y="14.6" width="1.800" height="1.800" fill="#2c2a28"/><rect x="6.6" y="14.6" width="1.800" height="1.800" fill="#2c2a28"/><rect x="10.4" y="14.6" width="1.800" height="1.800" fill="#2c2a28"/></svg>
<svg style="left:125.8px;top:651.7px" width="18" height="14.6" viewBox="0 0 18 14.6"><path d="M0 1.600h5.800l1.200 1.400H18v11.600H0z" fill="#fad568"/><path d="M0 1.600h5.800l1.200 1.400H0z" fill="#e9b93c"/><path d="M1.200 .9h3.200v1H1.200z" fill="#fff3c4"/><path d="M0 4.400h18v1H0z" fill="#fce391"/><path d="M3.800 14.600V8.400h10.400v6.200h-2.400v-3.800H6.200v3.800z" fill="#2a97ee"/></svg>
<svg style="left:165px;top:650.8px" width="17" height="17" viewBox="0 0 17 17"><path d="M8.700 .3a8 8 0 0 0-6.900 12L.4 16.600l4.500-1.300A8 8 0 1 0 8.700 .3z" fill="#fff"/><path d="M8.700 1.600a6.700 6.700 0 0 0-5.600 10.300l-.8 2.800 2.900-.8A6.700 6.700 0 1 0 8.700 1.600z" fill="#2cb742"/><path d="M6.200 4.600c-.3-.6-.9-.5-1.200-.1-1.700 2 1.700 6.600 4.800 7.200 1 .2 2.100-.7 2.100-1.600l-1.900-1-.9 .9c-1.100-.4-2.200-1.500-2.700-2.700l.8-.8z" fill="#fff"/></svg>
<svg style="left:203px;top:650px" width="19" height="18.4" viewBox="0 0 19 18.4"><rect x="0" y="0" width="19" height="18.400" rx="3" fill="#1b2db0"/><path d="M5.200 3.800h8.600l2.800 6H2.400z" fill="none" stroke="#fff" stroke-width="1.100"/><path d="M4.600 8.200h9.800l.8 1.600H3.800z" fill="#2a7be4"/><rect x="2.400" y="10.800" width="14.200" height="4" fill="#fff"/><rect x="4" y="12.200" width="11" height="1" fill="#1b2db0"/></svg>
<svg style="left:242px;top:649.7px" width="17" height="17.3" viewBox="0 0 17 17.3"><defs><linearGradient id="gw" x1="0" y1="0" x2="1" y2="0.6"><stop offset="0" stop-color="#dbe8fa"/><stop offset=".55" stop-color="#9fc0ee"/><stop offset="1" stop-color="#3f7bd3"/></linearGradient></defs><rect x="0" y="0" width="17" height="17.300" rx="2.200" fill="url(#gw)"/><path d="M1.200 14.200L16.600 9.800V15.800a1.500 1.500 0 0 1-1.500 1.500H2.500a1.500 1.500 0 0 1-1.300-1z" fill="#f6f9fe"/><path d="M9.500 12l7-2v3.600z" fill="#c9dcf5"/><text x="6.800" y="12.800" font-size="13" font-weight="bold" fill="#1b57ba" text-anchor="middle" font-family="Liberation Sans, sans-serif">W</text></svg>
<svg style="left:281px;top:649.7px" width="20.4" height="20" viewBox="0 0 20.4 20"><defs><linearGradient id="go" x1="0" y1="0" x2="1" y2="1"><stop offset="0" stop-color="#fde39a"/><stop offset=".6" stop-color="#f8c24a"/><stop offset="1" stop-color="#f0a21e"/></linearGradient></defs><rect x="0" y="0" width="17" height="17.300" rx="2.200" fill="url(#go)"/><path d="M1 15c2-3 4-4.500 7-5l3 7.300H2.500A1.500 1.500 0 0 1 1 15.800z" fill="#fdf3d6"/><text x="7" y="12.400" font-size="13" font-weight="bold" fill="#ec8412" stroke="#fff3d8" stroke-width=".9" paint-order="stroke" text-anchor="middle" font-family="Liberation Sans, sans-serif">O</text><circle cx="15.300" cy="7.600" r="2.300" fill="#f7efe2" stroke="#d98a3a" stroke-width=".6"/><path d="M15.300 6.300v1.400l1 .6" fill="none" stroke="#c0392b" stroke-width=".5"/><rect x="7.800" y="10.200" width="12.300" height="9.500" fill="#f6e3a6" stroke="#caa24c" stroke-width=".6"/><path d="M7.800 10.200l6.150 5.200 6.150-5.200M7.800 19.700l4.800-5.200M20.100 19.700l-4.800-5.200" fill="none" stroke="#caa24c" stroke-width=".6"/></svg>
<svg style="left:319.5px;top:649.7px" width="17" height="17.3" viewBox="0 0 17 17.3"><defs><linearGradient id="gx" x1="0" y1="0" x2="1" y2="0.6"><stop offset="0" stop-color="#d6efd0"/><stop offset=".55" stop-color="#8fd08a"/><stop offset="1" stop-color="#349a3c"/></linearGradient></defs><rect x="0" y="0" width="17" height="17.300" rx="2.200" fill="url(#gx)"/><path d="M1.200 14.600L16.600 9.400V15.800a1.500 1.500 0 0 1-1.500 1.500H2.500a1.500 1.500 0 0 1-1.300-1z" fill="#f3faf2"/><path d="M10 12.800l6.600-2M10.600 14.800l6-1.800" stroke="#8cc68a" stroke-width=".7"/><text x="6.800" y="12.800" font-size="13" font-weight="bold" fill="#1c7d2c" text-anchor="middle" font-family="Liberation Sans, sans-serif">X</text></svg>
<svg style="left:359px;top:650.6px" width="17.8" height="17.4" viewBox="0 0 17.8 17.4"><rect x="0" y="2.400" width="15.400" height="15" fill="#f1f3f5"/><rect x="2" y="14.400" width="11.400" height="1" fill="#c9ced4"/><circle cx="10" cy="7.800" r="7.600" fill="#1d2c3d"/><circle cx="10" cy="7.800" r="7.600" fill="none" stroke="#5b7690" stroke-width=".9"/><path d="M10 .2l3.200 5.600M17.600 7.800l-6.400-.6M14 14.400l-3-5.400M6 14.400l3.400-5.200M2.400 7.800h6.400M6 1.400l3.400 5.400" stroke="#7fa3c2" stroke-width=".7"/><circle cx="8.600" cy="8" r="2.200" fill="#fff"/></svg>
<svg style="left:397px;top:650px" width="18" height="17" viewBox="0 0 18 17"><rect x=".6" y=".6" width="16.800" height="15.800" fill="#1a1766" stroke="#8fb7f5" stroke-width="1.100"/><text x="9" y="12.400" font-size="10.500" font-weight="bold" fill="#a6c8ff" text-anchor="middle" font-family="Liberation Sans, sans-serif">Ps</text></svg>
<svg style="left:435.8px;top:650px" width="18" height="17" viewBox="0 0 18 17"><rect x=".6" y=".6" width="16.800" height="15.800" fill="#0c1c2b" stroke="#9fc4e6" stroke-width="1.100"/><text x="9" y="12.600" font-size="11" fill="#eaf3fb" text-anchor="middle" font-family="Liberation Sans, sans-serif">Lr</text></svg>
<svg style="left:475px;top:650.8px" width="17" height="16.7" viewBox="0 0 17 16.7"><rect x="0" y="0" width="17" height="16.700" rx=".8" fill="#f15a22"/><rect x="3.400" y="3.400" width="10.200" height="10" fill="#f47b4d"/><text x="8.600" y="13" font-size="12.500" font-weight="bold" fill="#fff" text-anchor="middle" font-family="Liberation Sans, sans-serif">R</text></svg>
<svg style="left:513.7px;top:652.5px" width="17.6" height="13.5" viewBox="0 0 17.6 13.5"><path d="M0 2.400h4.600l1.200-2.200h6l1.200 2.200h4.600v11.100H0z" fill="#cfcfcf"/><circle cx="8.800" cy="7.800" r="4.300" fill="#b5b5b5" stroke="#e9e9e9" stroke-width=".9"/><path d="M6 10l5.200-4.600" stroke="#dcdcdc" stroke-width=".7"/></svg>
<svg style="left:553.3px;top:652.5px" width="15.8" height="15" viewBox="0 0 15.8 15"><path d="M.3 6.800C1 2.600 4.200 0 8.200 0c4.400 0 7.400 3 7.400 7.600v1.600H5.600c.2 2 1.900 3 4 3 1.800 0 3.600-.6 5-1.500v3.200c-1.600.8-3.600 1.200-5.600 1.200-4.400 0-7.400-2.500-7.400-6.700 0-2.700 1.700-4.800 4-5.800C4.600 3.600 4.200 5 4.200 6.200h6.600C10.800 4.200 9.700 3 7.700 3 4.600 3 1.800 4.800 .3 6.800z" fill="#1382dc"/></svg>
<svg style="left:590.8px;top:650px" width="18.4" height="17.8" viewBox="0 0 18.4 17.8"><ellipse cx="9.200" cy="8.900" rx="9.200" ry="8.900" fill="#ee1c2e"/><ellipse cx="9" cy="9.100" rx="4.300" ry="5.600" fill="#2d2a28"/><path d="M9.200 0a9.200 8.900 0 0 1 0 17.800c3.600-.6 5.800-4 5.800-8.900S12.800 .6 9.200 0z" fill="#b80f22" opacity=".55"/></svg>
<svg style="left:629.7px;top:650.5px" width="17.8" height="17.6" viewBox="0 0 17.8 17.6"><circle cx="8.900" cy="8.800" r="8.800" fill="#fbc116"/><path d="M8.900 8.800L1.300 4.400A8.800 8.800 0 0 1 16.500 4.400z" fill="#e33b2e"/><path d="M8.900 8.800l-7.600-4.400A8.800 8.800 0 0 0 8.400 17.600l4.300-6.600z" fill="#2da94f"/><path d="M8.900 4.400h7.600" stroke="#e33b2e" stroke-width="0"/><circle cx="8.900" cy="8.800" r="4" fill="#fff"/><circle cx="8.900" cy="8.800" r="3.200" fill="#4a8af4"/></svg>
<svg style="left:668.1px;top:649.7px" width="17.4" height="17.5" viewBox="0 0 17.4 17.5"><defs><linearGradient id="ga" x1="0" y1="0" x2="1" y2="0.7"><stop offset="0" stop-color="#fbd9ea"/><stop offset=".55" stop-color="#ef9cc8"/><stop offset="1" stop-color="#d6479a"/></linearGradient></defs><rect x="0" y="0" width="17.400" height="17.500" rx="2.200" fill="url(#ga)"/><path d="M3 16.500c3.500-4.500 8-7.500 14.400-8.500v7.800a1.500 1.500 0 0 1-1.500 1.500H4z" fill="#fdf1f7"/><path d="M8 15.200c2.600-2 5.600-3 9.400-3.400v1.500c-3 .3-5.600 1-8 2.600z" fill="#e271b0"/><rect x="13.600" y="6.800" width="2.600" height="1.600" fill="#b4186c"/><text x="6.400" y="12.800" font-size="13.500" font-weight="bold" fill="#ad115e" text-anchor="middle" font-family="Liberation Sans, sans-serif">A</text></svg>
<svg style="left:1015.5px;top:656px" width="10.8" height="6.5" viewBox="0 0 10.8 6.5"><path d="M.5 6L5.400 .8 10.300 6" fill="none" stroke="#fff" stroke-width="1.100"/></svg>
<svg style="left:1032.5px;top:655px" width="13.6" height="9" viewBox="0 0 13.6 9"><rect x="2" y="2" width="11.400" height="6.600" rx=".8" fill="#e8e8e8"/><rect x="0" y="0" width="3" height="3.400" fill="#e8e8e8"/><rect x=".8" y="3.400" width="1.200" height="5" fill="#e8e8e8"/><rect x="3.400" y="3.200" width="8.600" height="4.200" fill="#d0d0d0"/><path d="M4.600 5.300h6" stroke="#8a8a8a" stroke-width=".8"/></svg>
<svg style="left:1052px;top:655px" width="13.2" height="9" viewBox="0 0 13.2 9"><path d="M3.200 9A3 3 0 0 1 2.800 3 4.200 4.200 0 0 1 10.600 3.600 2.800 2.800 0 0 1 10.400 9z" fill="#e4e4e4"/><path d="M2.800 5.400c2.600-.8 5.600.2 8 3.400" fill="none" stroke="#bdbdbd" stroke-width=".7"/></svg>
<svg style="left:1072px;top:655px" width="10.8" height="10.2" viewBox="0 0 10.8 10.2"><path d="M.6 9.600A9 9 0 0 1 9.800 .6" fill="none" stroke="#e6e6e6" stroke-width=".9"/><path d="M3.400 9.600A6.200 6.200 0 0 1 9.800 3.400" fill="none" stroke="#e6e6e6" stroke-width=".9"/><path d="M6.200 9.600A3.500 3.500 0 0 1 9.800 6.200" fill="none" stroke="#e6e6e6" stroke-width=".9"/><circle cx="9.400" cy="9.300" r=".9" fill="#fff"/></svg>
<svg style="left:1088.7px;top:655px" width="12.6" height="9.6" viewBox="0 0 12.6 9.6"><path d="M.4 3.200h2L5 .6v8.400L2.400 6.400h-2z" fill="none" stroke="#fff" stroke-width=".8"/><path d="M7.200 2.400l5 5M12.200 2.400l-5 5" stroke="#fff" stroke-width="1"/></svg>
<svg style="left:1167.5px;top:653px" width="13.6" height="12.6" viewBox="0 0 13.6 12.6"><path d="M.5 .5h12.600v9H8.400L6.800 11.600 5.200 9.500H.5z" fill="none" stroke="#fff" stroke-width=".9"/></svg>
<span class="t" style="left:195px;top:4px;font-size:8.6px;color:#75584a;-webkit-text-stroke:0.08px;transform:translate3d(0.70px,0.60px,0) scaleX(0.9321);">Suchtools</span>
<span class="t" style="left:245px;top:4px;font-size:9.6px;color:#ffffff;-webkit-text-stroke:0.08px;transform:translate3d(0.00px,0.20px,0) scaleX(0.9344);">*.ARW - Suchergebnisse in &quot;100MSDCF&quot;</span>
<span class="t" style="left:12px;top:22px;font-size:9.4px;color:#ffffff;-webkit-text-stroke:0.08px;transform:translate3d(0.50px,0.20px,0) scaleX(0.8577);">Datei</span>
<span class="t" style="left:54px;top:22px;font-size:9.7px;color:#333333;-webkit-text-stroke:0.08px;transform:translate3d(0.50px,0.20px,0) scaleX(0.7945);">Start</span>
<span class="t" style="left:93px;top:22px;font-size:9.7px;color:#333333;-webkit-text-stroke:0.08px;transform:translate3d(0.00px,0.20px,0) scaleX(0.8396);">Freigeben</span>
<span class="t" style="left:151px;top:22px;font-size:9.7px;color:#333333;-webkit-text-stroke:0.08px;transform:translate3d(0.00px,0.20px,0) scaleX(0.8106);">Ansicht</span>
<span class="t" style="left:200px;top:22px;font-size:9.7px;color:#333333;-webkit-text-stroke:0.08px;transform:translate3d(0.00px,0.20px,0) scaleX(0.7854);">Suchen</span>
<span class="t" style="left:8px;top:68px;font-size:9.7px;color:#333333;-webkit-text-stroke:0.08px;transform:translate3d(0.00px,0.60px,0) scaleX(0.7856);">Dieser</span>
<span class="t" style="left:14px;top:78px;font-size:9.7px;color:#333333;-webkit-text-stroke:0.08px;transform:translate3d(0.75px,0.80px,0) scaleX(0.6871);">PC</span>
<span class="t" style="left:52px;top:42px;font-size:9.7px;color:#333333;-webkit-text-stroke:0.08px;transform:translate3d(0.00px,0.70px,0) scaleX(0.8344);">Aktueller Ordner</span>
<span class="t" style="left:52px;top:59px;font-size:9.7px;color:#333333;-webkit-text-stroke:0.08px;transform:translate3d(0.00px,0.40px,0) scaleX(0.8414);">Alle Unterordner</span>
<span class="t" style="left:52px;top:76px;font-size:9.7px;color:#333333;-webkit-text-stroke:0.08px;transform:translate3d(0.00px,0.10px,0) scaleX(0.8159);">Erneut suchen in</span>
<span class="t" style="left:41px;top:94px;font-size:9.7px;color:#6b6b6b;-webkit-text-stroke:0.08px;transform:translate3d(0.25px,0.30px,0) scaleX(0.8375);">Speicherort</span>
<span class="t" style="left:129px;top:68px;font-size:9.7px;color:#333333;-webkit-text-stroke:0.08px;transform:translate3d(0.50px,0.60px,0) scaleX(0.8479);">Änderungsdatum</span>
<span class="t" style="left:210px;top:42px;font-size:9.7px;color:#333333;-webkit-text-stroke:0.08px;transform:translate3d(0.00px,0.70px,0) scaleX(0.7882);">Art</span>
<span class="t" style="left:210px;top:59px;font-size:9.7px;color:#333333;-webkit-text-stroke:0.08px;transform:translate3d(0.00px,0.80px,0) scaleX(0.8128);">Größe</span>
<span class="t" style="left:210px;top:76px;font-size:9.7px;color:#333333;-webkit-text-stroke:0.08px;transform:translate3d(0.00px,0.10px,0) scaleX(0.8279);">Andere Eigenschaften</span>
<span class="t" style="left:194px;top:94px;font-size:9.7px;color:#6b6b6b;-webkit-text-stroke:0.08px;transform:translate3d(0.40px,0.30px,0) scaleX(0.8361);">Verfeinern</span>
<span class="t" style="left:322px;top:42px;font-size:9.7px;color:#333333;-webkit-text-stroke:0.08px;transform:translate3d(0.00px,0.70px,0) scaleX(0.8327);">Zuletzt ausgeführte Suchvorgänge</span>
<span class="t" style="left:322px;top:59px;font-size:9.7px;color:#333333;-webkit-text-stroke:0.08px;transform:translate3d(0.00px,0.80px,0) scaleX(0.8448);">Erweiterte Optionen</span>
<span class="t" style="left:322px;top:76px;font-size:9.7px;color:#333333;-webkit-text-stroke:0.08px;transform:translate3d(0.00px,0.10px,0) scaleX(0.8150);">Suche speichern</span>
<span class="t" style="left:383px;top:94px;font-size:9.7px;color:#6b6b6b;-webkit-text-stroke:0.08px;transform:translate3d(0.00px,0.30px,0) scaleX(0.8477);">Optionen</span>
<span class="t" style="left:456px;top:68px;font-size:9.7px;color:#a6a6a6;-webkit-text-stroke:0.08px;transform:translate3d(0.30px,0.60px,0) scaleX(0.8690);">Dateipfad</span>
<span class="t" style="left:462px;top:78px;font-size:9.7px;color:#a6a6a6;-webkit-text-stroke:0.08px;transform:translate3d(0.60px,0.80px,0) scaleX(0.8722);">öffnen</span>
<span class="t" style="left:508px;top:68px;font-size:9.7px;color:#333333;-webkit-text-stroke:0.08px;transform:translate3d(0.00px,0.60px,0) scaleX(0.7755);">Suche</span>
<span class="t" style="left:503px;top:78px;font-size:9.7px;color:#333333;-webkit-text-stroke:0.08px;transform:translate3d(0.00px,0.80px,0) scaleX(0.7986);">schließen</span>
<span class="t" style="left:114px;top:115px;font-size:9.8px;color:#000000;-webkit-text-stroke:0.15px;transform:translate3d(0.20px,0.70px,0) scaleX(0.9022);">Suchergebnisse in &quot;100MSDCF&quot;</span>
<span class="t" style="left:1085px;top:115px;font-size:9.8px;color:#000000;-webkit-text-stroke:0.15px;transform:translate3d(0.00px,0.80px,0) scaleX(0.8676);">*.ARW</span>
<span class="t" style="left:47px;top:139px;font-size:9.9px;color:#000000;-webkit-text-stroke:0.2px;transform:translate3d(0.10px,0.15px,0) scaleX(0.9567);">Anlagen</span>
<span class="t" style="left:47px;top:157px;font-size:9.9px;color:#000000;-webkit-text-stroke:0.2px;transform:translate3d(0.10px,0.90px,0) scaleX(0.9246);">Bilder</span>
<span class="t" style="left:47px;top:176px;font-size:9.9px;color:#000000;-webkit-text-stroke:0.2px;transform:translate3d(0.10px,0.65px,0) scaleX(0.9352);">Dokumente</span>
<span class="t" style="left:47px;top:195px;font-size:9.9px;color:#000000;-webkit-text-stroke:0.2px;transform:translate3d(0.10px,0.40px,0) scaleX(0.9231);">Energieverbrauch</span>
<span class="t" style="left:40px;top:214px;font-size:9.9px;color:#000000;-webkit-text-stroke:0.2px;transform:translate3d(0.90px,0.15px,0) scaleX(0.8938);">Rene Beukert</span>
<span class="t" style="left:40px;top:232px;font-size:9.9px;color:#000000;-webkit-text-stroke:0.2px;transform:translate3d(0.90px,0.90px,0) scaleX(0.8715);">Dieser PC</span>
<span class="t" style="left:47px;top:251px;font-size:9.9px;color:#000000;-webkit-text-stroke:0.2px;transform:translate3d(0.10px,0.65px,0) scaleX(0.9514);">3D-Objekte</span>
<span class="t" style="left:47px;top:270px;font-size:9.9px;color:#000000;-webkit-text-stroke:0.2px;transform:translate3d(0.10px,0.40px,0) scaleX(0.9246);">Bilder</span>
<span class="t" style="left:47px;top:289px;font-size:9.9px;color:#000000;-webkit-text-stroke:0.2px;transform:translate3d(0.10px,0.15px,0) scaleX(0.9310);">Desktop</span>
<span class="t" style="left:47px;top:307px;font-size:9.9px;color:#000000;-webkit-text-stroke:0.2px;transform:translate3d(0.10px,0.90px,0) scaleX(0.9352);">Dokumente</span>
<span class="t" style="left:47px;top:326px;font-size:9.9px;color:#000000;-webkit-text-stroke:0.2px;transform:translate3d(0.10px,0.65px,0) scaleX(0.9526);">Downloads</span>
<span class="t" style="left:47px;top:345px;font-size:9.9px;color:#000000;-webkit-text-stroke:0.2px;transform:translate3d(0.10px,0.40px,0) scaleX(0.9169);">Musik</span>
<span class="t" style="left:47px;top:364px;font-size:9.9px;color:#000000;-webkit-text-stroke:0.2px;transform:translate3d(0.10px,0.15px,0) scaleX(0.9276);">Videos</span>
<span class="t" style="left:47px;top:382px;font-size:9.9px;color:#000000;-webkit-text-stroke:0.2px;transform:translate3d(0.10px,0.90px,0) scaleX(0.9141);">Windows (C:)</span>
<span class="t" style="left:47px;top:401px;font-size:9.9px;color:#000000;-webkit-text-stroke:0.2px;transform:translate3d(0.10px,0.65px,0) scaleX(0.9294);">AlphaFotos (D:)</span>
<span class="t" style="left:47px;top:420px;font-size:9.9px;color:#000000;-webkit-text-stroke:0.2px;transform:translate3d(0.10px,0.40px,0) scaleX(0.9006);">Volume (E:)</span>
<span class="t" style="left:47px;top:439px;font-size:9.9px;color:#000000;-webkit-text-stroke:0.2px;transform:translate3d(0.10px,0.15px,0) scaleX(0.8838);">USB-Laufwerk (F:)</span>
<span class="t" style="left:53px;top:457px;font-size:9.9px;color:#000000;-webkit-text-stroke:0.2px;transform:translate3d(0.30px,0.90px,0) scaleX(0.8251);">AVF_INFO</span>
<span class="t" style="left:53px;top:476px;font-size:9.9px;color:#000000;-webkit-text-stroke:0.2px;transform:translate3d(0.30px,0.65px,0) scaleX(0.9118);">DCIM</span>
<span class="t" style="left:53px;top:495px;font-size:9.9px;color:#000000;-webkit-text-stroke:0.2px;transform:translate3d(0.30px,0.40px,0) scaleX(0.8095);">MP_ROOT</span>
<span class="t" style="left:53px;top:514px;font-size:9.9px;color:#000000;-webkit-text-stroke:0.2px;transform:translate3d(0.30px,0.15px,0) scaleX(0.8083);">PRIVATE</span>
<span class="t" style="left:40px;top:532px;font-size:9.9px;color:#000000;-webkit-text-stroke:0.2px;transform:translate3d(0.90px,0.90px,0) scaleX(0.9679);">Bibliotheken</span>
<span class="t" style="left:47px;top:551px;font-size:9.9px;color:#000000;-webkit-text-stroke:0.2px;transform:translate3d(0.10px,0.65px,0) scaleX(0.9246);">Bilder</span>
<span class="t" style="left:47px;top:570px;font-size:9.9px;color:#000000;-webkit-text-stroke:0.2px;transform:translate3d(0.10px,0.40px,0) scaleX(0.9352);">Dokumente</span>
<span class="t" style="left:47px;top:589px;font-size:9.9px;color:#000000;-webkit-text-stroke:0.2px;transform:translate3d(0.10px,0.15px,0) scaleX(0.9352);">Eigene Aufnahmen</span>
<span class="t" style="left:47px;top:607px;font-size:9.9px;color:#000000;-webkit-text-stroke:0.2px;transform:translate3d(0.10px,0.90px,0) scaleX(0.9207);">Gespeicherte Bilder</span>
<span class="t" style="left:275px;top:146px;font-size:12.2px;color:#111;-webkit-text-stroke:0.2px;transform:translate3d(0.00px,0.10px,0) scaleX(0.8830);">A7F09812.ARW</span>
<span class="t" style="left:509px;top:147px;font-size:9.9px;color:#707070;-webkit-text-stroke:0.08px;transform:translate3d(0.10px,0.80px,0) scaleX(0.9210);">Typ:</span>
<span class="t" style="left:528px;top:147px;font-size:9.9px;color:#1a1a1a;-webkit-text-stroke:0.08px;transform:translate3d(0.60px,0.80px,0) scaleX(0.9400);">ARW-Datei</span>
<span class="t" style="left:743px;top:161px;font-size:9.9px;color:#707070;-webkit-text-stroke:0.08px;transform:translate3d(0.40px,0.60px,0) scaleX(0.8904);">Größe:</span>
<span class="t" style="left:772px;top:161px;font-size:9.9px;color:#1a1a1a;-webkit-text-stroke:0.08px;transform:translate3d(0.50px,0.60px,0) scaleX(0.8874);">47,3 MB</span>
<span class="t" style="left:275px;top:183px;font-size:12.2px;color:#111;-webkit-text-stroke:0.2px;transform:translate3d(0.00px,0.60px,0) scaleX(0.8921);">A7F09811.ARW</span>
<span class="t" style="left:509px;top:185px;font-size:9.9px;color:#707070;-webkit-text-stroke:0.08px;transform:translate3d(0.10px,0.30px,0) scaleX(0.9210);">Typ:</span>
<span class="t" style="left:528px;top:185px;font-size:9.9px;color:#1a1a1a;-webkit-text-stroke:0.08px;transform:translate3d(0.60px,0.30px,0) scaleX(0.9400);">ARW-Datei</span>
<span class="t" style="left:743px;top:199px;font-size:9.9px;color:#707070;-webkit-text-stroke:0.08px;transform:translate3d(0.40px,0.10px,0) scaleX(0.8904);">Größe:</span>
<span class="t" style="left:772px;top:199px;font-size:9.9px;color:#1a1a1a;-webkit-text-stroke:0.08px;transform:translate3d(0.50px,0.10px,0) scaleX(0.8874);">47,3 MB</span>
<span class="t" style="left:275px;top:221px;font-size:12.2px;color:#111;-webkit-text-stroke:0.2px;transform:translate3d(0.00px,0.10px,0) scaleX(0.8830);">A7F09810.ARW</span>
<span class="t" style="left:509px;top:222px;font-size:9.9px;color:#707070;-webkit-text-stroke:0.08px;transform:translate3d(0.10px,0.80px,0) scaleX(0.9210);">Typ:</span>
<span class="t" style="left:528px;top:222px;font-size:9.9px;color:#1a1a1a;-webkit-text-stroke:0.08px;transform:translate3d(0.60px,0.80px,0) scaleX(0.9400);">ARW-Datei</span>
<span class="t" style="left:743px;top:236px;font-size:9.9px;color:#707070;-webkit-text-stroke:0.08px;transform:translate3d(0.40px,0.60px,0) scaleX(0.8904);">Größe:</span>
<span class="t" style="left:772px;top:236px;font-size:9.9px;color:#1a1a1a;-webkit-text-stroke:0.08px;transform:translate3d(0.50px,0.60px,0) scaleX(0.8874);">47,3 MB</span>
<span class="t" style="left:275px;top:258px;font-size:12.2px;color:#111;-webkit-text-stroke:0.2px;transform:translate3d(0.00px,0.60px,0) scaleX(0.8830);">A7F09809.ARW</span>
<span class="t" style="left:509px;top:260px;font-size:9.9px;color:#707070;-webkit-text-stroke:0.08px;transform:translate3d(0.10px,0.30px,0) scaleX(0.9210);">Typ:</span>
<span class="t" style="left:528px;top:260px;font-size:9.9px;color:#1a1a1a;-webkit-text-stroke:0.08px;transform:translate3d(0.60px,0.30px,0) scaleX(0.9400);">ARW-Datei</span>
<span class="t" style="left:743px;top:274px;font-size:9.9px;color:#707070;-webkit-text-stroke:0.08px;transform:translate3d(0.40px,0.10px,0) scaleX(0.8904);">Größe:</span>
<span class="t" style="left:772px;top:274px;font-size:9.9px;color:#1a1a1a;-webkit-text-stroke:0.08px;transform:translate3d(0.50px,0.10px,0) scaleX(0.8874);">46,9 MB</span>
<span class="t" style="left:275px;top:296px;font-size:12.2px;color:#111;-webkit-text-stroke:0.2px;transform:translate3d(0.00px,0.10px,0) scaleX(0.8830);">A7F09808.ARW</span>
<span class="t" style="left:509px;top:297px;font-size:9.9px;color:#707070;-webkit-text-stroke:0.08px;transform:translate3d(0.10px,0.80px,0) scaleX(0.9210);">Typ:</span>
<span class="t" style="left:528px;top:297px;font-size:9.9px;color:#1a1a1a;-webkit-text-stroke:0.08px;transform:translate3d(0.60px,0.80px,0) scaleX(0.9400);">ARW-Datei</span>
<span class="t" style="left:743px;top:311px;font-size:9.9px;color:#707070;-webkit-text-stroke:0.08px;transform:translate3d(0.40px,0.60px,0) scaleX(0.8904);">Größe:</span>
<span class="t" style="left:772px;top:311px;font-size:9.9px;color:#1a1a1a;-webkit-text-stroke:0.08px;transform:translate3d(0.50px,0.60px,0) scaleX(0.8874);">47,0 MB</span>
<span class="t" style="left:275px;top:333px;font-size:12.2px;color:#111;-webkit-text-stroke:0.2px;transform:translate3d(0.00px,0.60px,0) scaleX(0.8830);">A7F09807.ARW</span>
<span class="t" style="left:509px;top:335px;font-size:9.9px;color:#707070;-webkit-text-stroke:0.08px;transform:translate3d(0.10px,0.30px,0) scaleX(0.9210);">Typ:</span>
<span class="t" style="left:528px;top:335px;font-size:9.9px;color:#1a1a1a;-webkit-text-stroke:0.08px;transform:translate3d(0.60px,0.30px,0) scaleX(0.9400);">ARW-Datei</span>
<span class="t" style="left:743px;top:349px;font-size:9.9px;color:#707070;-webkit-text-stroke:0.08px;transform:translate3d(0.40px,0.10px,0) scaleX(0.8904);">Größe:</span>
<span class="t" style="left:772px;top:349px;font-size:9.9px;color:#1a1a1a;-webkit-text-stroke:0.08px;transform:translate3d(0.50px,0.10px,0) scaleX(0.8874);">47,1 MB</span>
<span class="t" style="left:275px;top:371px;font-size:12.2px;color:#111;-webkit-text-stroke:0.2px;transform:translate3d(0.00px,0.10px,0) scaleX(0.8830);">A7F09806.ARW</span>
<span class="t" style="left:509px;top:372px;font-size:9.9px;color:#707070;-webkit-text-stroke:0.08px;transform:translate3d(0.10px,0.80px,0) scaleX(0.9210);">Typ:</span>
<span class="t" style="left:528px;top:372px;font-size:9.9px;color:#1a1a1a;-webkit-text-stroke:0.08px;transform:translate3d(0.60px,0.80px,0) scaleX(0.9400);">ARW-Datei</span>
<span class="t" style="left:743px;top:386px;font-size:9.9px;color:#707070;-webkit-text-stroke:0.08px;transform:translate3d(0.40px,0.60px,0) scaleX(0.8904);">Größe:</span>
<span class="t" style="left:772px;top:386px;font-size:9.9px;color:#1a1a1a;-webkit-text-stroke:0.08px;transform:translate3d(0.50px,0.60px,0) scaleX(0.8874);">46,9 MB</span>
<span class="t" style="left:275px;top:408px;font-size:12.2px;color:#111;-webkit-text-stroke:0.2px;transform:translate3d(0.00px,0.60px,0) scaleX(0.8830);">A7F09805.ARW</span>
<span class="t" style="left:509px;top:410px;font-size:9.9px;color:#707070;-webkit-text-stroke:0.08px;transform:translate3d(0.10px,0.30px,0) scaleX(0.9210);">Typ:</span>
<span class="t" style="left:528px;top:410px;font-size:9.9px;color:#1a1a1a;-webkit-text-stroke:0.08px;transform:translate3d(0.60px,0.30px,0) scaleX(0.9400);">ARW-Datei</span>
<span class="t" style="left:743px;top:424px;font-size:9.9px;color:#707070;-webkit-text-stroke:0.08px;transform:translate3d(0.40px,0.10px,0) scaleX(0.8904);">Größe:</span>
<span class="t" style="left:772px;top:424px;font-size:9.9px;color:#1a1a1a;-webkit-text-stroke:0.08px;transform:translate3d(0.50px,0.10px,0) scaleX(0.8874);">46,9 MB</span>
<span class="t" style="left:275px;top:446px;font-size:12.2px;color:#111;-webkit-text-stroke:0.2px;transform:translate3d(0.00px,0.10px,0) scaleX(0.8830);">A7F09804.ARW</span>
<span class="t" style="left:509px;top:447px;font-size:9.9px;color:#707070;-webkit-text-stroke:0.08px;transform:translate3d(0.10px,0.80px,0) scaleX(0.9210);">Typ:</span>
<span class="t" style="left:528px;top:447px;font-size:9.9px;color:#1a1a1a;-webkit-text-stroke:0.08px;transform:translate3d(0.60px,0.80px,0) scaleX(0.9400);">ARW-Datei</span>
<span class="t" style="left:743px;top:461px;font-size:9.9px;color:#707070;-webkit-text-stroke:0.08px;transform:translate3d(0.40px,0.60px,0) scaleX(0.8904);">Größe:</span>
<span class="t" style="left:772px;top:461px;font-size:9.9px;color:#1a1a1a;-webkit-text-stroke:0.08px;transform:translate3d(0.50px,0.60px,0) scaleX(0.8874);">47,4 MB</span>
<span class="t" style="left:275px;top:483px;font-size:12.2px;color:#111;-webkit-text-stroke:0.2px;transform:translate3d(0.00px,0.60px,0) scaleX(0.8830);">A7F09803.ARW</span>
<span class="t" style="left:509px;top:485px;font-size:9.9px;color:#707070;-webkit-text-stroke:0.08px;transform:translate3d(0.10px,0.30px,0) scaleX(0.9210);">Typ:</span>
<span class="t" style="left:528px;top:485px;font-size:9.9px;color:#1a1a1a;-webkit-text-stroke:0.08px;transform:translate3d(0.60px,0.30px,0) scaleX(0.9400);">ARW-Datei</span>
<span class="t" style="left:743px;top:499px;font-size:9.9px;color:#707070;-webkit-text-stroke:0.08px;transform:translate3d(0.40px,0.10px,0) scaleX(0.8904);">Größe:</span>
<span class="t" style="left:772px;top:499px;font-size:9.9px;color:#1a1a1a;-webkit-text-stroke:0.08px;transform:translate3d(0.50px,0.10px,0) scaleX(0.8874);">47,0 MB</span>
<span class="t" style="left:275px;top:521px;font-size:12.2px;color:#111;-webkit-text-stroke:0.2px;transform:translate3d(0.00px,0.10px,0) scaleX(0.8830);">A7F09802.ARW</span>
<span class="t" style="left:509px;top:522px;font-size:9.9px;color:#707070;-webkit-text-stroke:0.08px;transform:translate3d(0.10px,0.80px,0) scaleX(0.9210);">Typ:</span>
<span class="t" style="left:528px;top:522px;font-size:9.9px;color:#1a1a1a;-webkit-text-stroke:0.08px;transform:translate3d(0.60px,0.80px,0) scaleX(0.9400);">ARW-Datei</span>
<span class="t" style="left:743px;top:536px;font-size:9.9px;color:#707070;-webkit-text-stroke:0.08px;transform:translate3d(0.40px,0.60px,0) scaleX(0.8904);">Größe:</span>
<span class="t" style="left:772px;top:536px;font-size:9.9px;color:#1a1a1a;-webkit-text-stroke:0.08px;transform:translate3d(0.50px,0.60px,0) scaleX(0.8874);">47,0 MB</span>
<span class="t" style="left:275px;top:558px;font-size:12.2px;color:#111;-webkit-text-stroke:0.2px;transform:translate3d(0.00px,0.60px,0) scaleX(0.8830);">A7F09801.ARW</span>
<span class="t" style="left:509px;top:560px;font-size:9.9px;color:#707070;-webkit-text-stroke:0.08px;transform:translate3d(0.10px,0.30px,0) scaleX(0.9210);">Typ:</span>
<span class="t" style="left:528px;top:560px;font-size:9.9px;color:#1a1a1a;-webkit-text-stroke:0.08px;transform:translate3d(0.60px,0.30px,0) scaleX(0.9400);">ARW-Datei</span>
<span class="t" style="left:743px;top:574px;font-size:9.9px;color:#707070;-webkit-text-stroke:0.08px;transform:translate3d(0.40px,0.10px,0) scaleX(0.8904);">Größe:</span>
<span class="t" style="left:772px;top:574px;font-size:9.9px;color:#1a1a1a;-webkit-text-stroke:0.08px;transform:translate3d(0.50px,0.10px,0) scaleX(0.8874);">47,0 MB</span>
<span class="t" style="left:275px;top:596px;font-size:12.2px;color:#111;-webkit-text-stroke:0.2px;transform:translate3d(0.00px,0.10px,0) scaleX(0.8830);">A7F09800.ARW</span>
<span class="t" style="left:509px;top:597px;font-size:9.9px;color:#707070;-webkit-text-stroke:0.08px;transform:translate3d(0.10px,0.80px,0) scaleX(0.9210);">Typ:</span>
<span class="t" style="left:528px;top:597px;font-size:9.9px;color:#1a1a1a;-webkit-text-stroke:0.08px;transform:translate3d(0.60px,0.80px,0) scaleX(0.9400);">ARW-Datei</span>
<span class="t" style="left:743px;top:611px;font-size:9.9px;color:#707070;-webkit-text-stroke:0.08px;transform:translate3d(0.40px,0.60px,0) scaleX(0.8904);">Größe:</span>
<span class="t" style="left:772px;top:611px;font-size:9.9px;color:#1a1a1a;-webkit-text-stroke:0.08px;transform:translate3d(0.50px,0.60px,0) scaleX(0.8874);">47,0 MB</span>
<span class="t" style="left:11px;top:630px;font-size:9.4px;color:#1e395b;-webkit-text-stroke:0.08px;transform:translate3d(0.20px,0.00px,0) scaleX(0.9646);">142 Elemente</span>
<span class="t" style="left:1121px;top:647px;font-size:10.2px;color:#ffffff;-webkit-text-stroke:0.08px;transform:translate3d(0.00px,0.30px,0) scaleX(0.8324);">16:00</span>
<span class="t" style="left:1110px;top:662px;font-size:10.2px;color:#ffffff;-webkit-text-stroke:0.08px;transform:translate3d(0.00px,0.00px,0) scaleX(0.8525);">07.07.2019</span>
</body></html>
